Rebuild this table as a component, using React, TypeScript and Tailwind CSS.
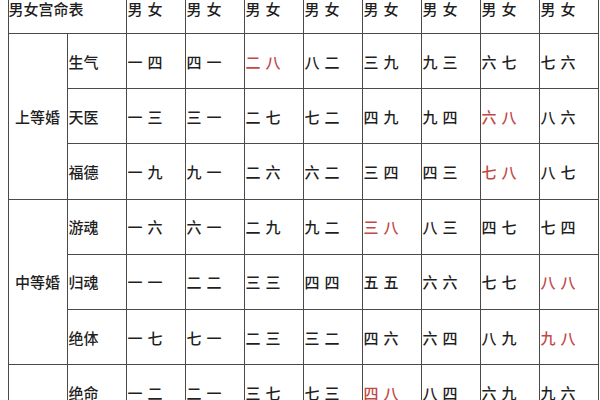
const groups = [
  {
    label: '上等婚',
    rows: [
      { name: '生气', values: ['一四', '四一', '二八', '八二', '三九', '九三', '六七', '七六'], red: 2 },
      { name: '天医', values: ['一三', '三一', '二七', '七二', '四九', '九四', '六八', '八六'], red: 6 },
      { name: '福德', values: ['一九', '九一', '二六', '六二', '三四', '四三', '七八', '八七'], red: 6 },
    ],
  },
  {
    label: '中等婚',
    rows: [
      { name: '游魂', values: ['一六', '六一', '二九', '九二', '三八', '八三', '四七', '七四'], red: 4 },
      { name: '归魂', values: ['一一', '二二', '三三', '四四', '五五', '六六', '七七', '八八'], red: 7 },
      { name: '绝体', values: ['一七', '七一', '二三', '三二', '四六', '六四', '八九', '九八'], red: 7 },
    ],
  },
  {
    label: '',
    rows: [
      { name: '绝命', values: ['一二', '二一', '三七', '七三', '四八', '八四', '六九', '九六'], red: 4 },
    ],
  },
]

function Pair({ text }: { text: string }) {
  return (
    <span className="inline-flex gap-[5px]">
      {text.split('').map((ch, i) => (
        <span key={i}>{ch}</span>
      ))}
    </span>
  )
}

export default function App() {
  const cell = 'border border-[#4a4a4a] align-middle'
  return (
    <div
      className="h-[400px] w-[600px] overflow-hidden bg-white text-[15px] leading-none font-medium text-[#1f1f1f]"
      style={{ fontFamily: '"Noto Sans CJK SC", "Noto Sans", sans-serif' }}
    >
      <table className="-mt-[23px] ml-[7.5px] w-[590px] table-fixed border-collapse">
        <colgroup>
          {Array.from({ length: 10 }).map((_, i) => (
            <col key={i} className="w-[59px]" />
          ))}
        </colgroup>
        <tbody>
          <tr className="h-[56px]">
            <td colSpan={2} className={`${cell} pl-0 pt-[5px]`}>
              男女宫命表
            </td>
            {Array.from({ length: 8 }).map((_, i) => (
              <td key={i} className={`${cell} pl-[1px] pt-[5px]`}>
                <Pair text="男女" />
              </td>
            ))}
          </tr>
          {groups.map((g) =>
            g.rows.map((r, ri) => (
              <tr key={r.name} className="h-[55.2px]">
                {ri === 0 && (
                  <td rowSpan={g.rows.length} className={`${cell} text-center`}>
                    {g.label}
                  </td>
                )}
                <td className={`${cell} pl-[1px]`}>{r.name}</td>
                {r.values.map((v, vi) => (
                  <td
                    key={vi}
                    className={`${cell} pl-[1px] ${vi === r.red ? 'text-[#c24848]' : ''}`}
                  >
                    <Pair text={v} />
                  </td>
                ))}
              </tr>
            ))
          )}
        </tbody>
      </table>
    </div>
  )
}
